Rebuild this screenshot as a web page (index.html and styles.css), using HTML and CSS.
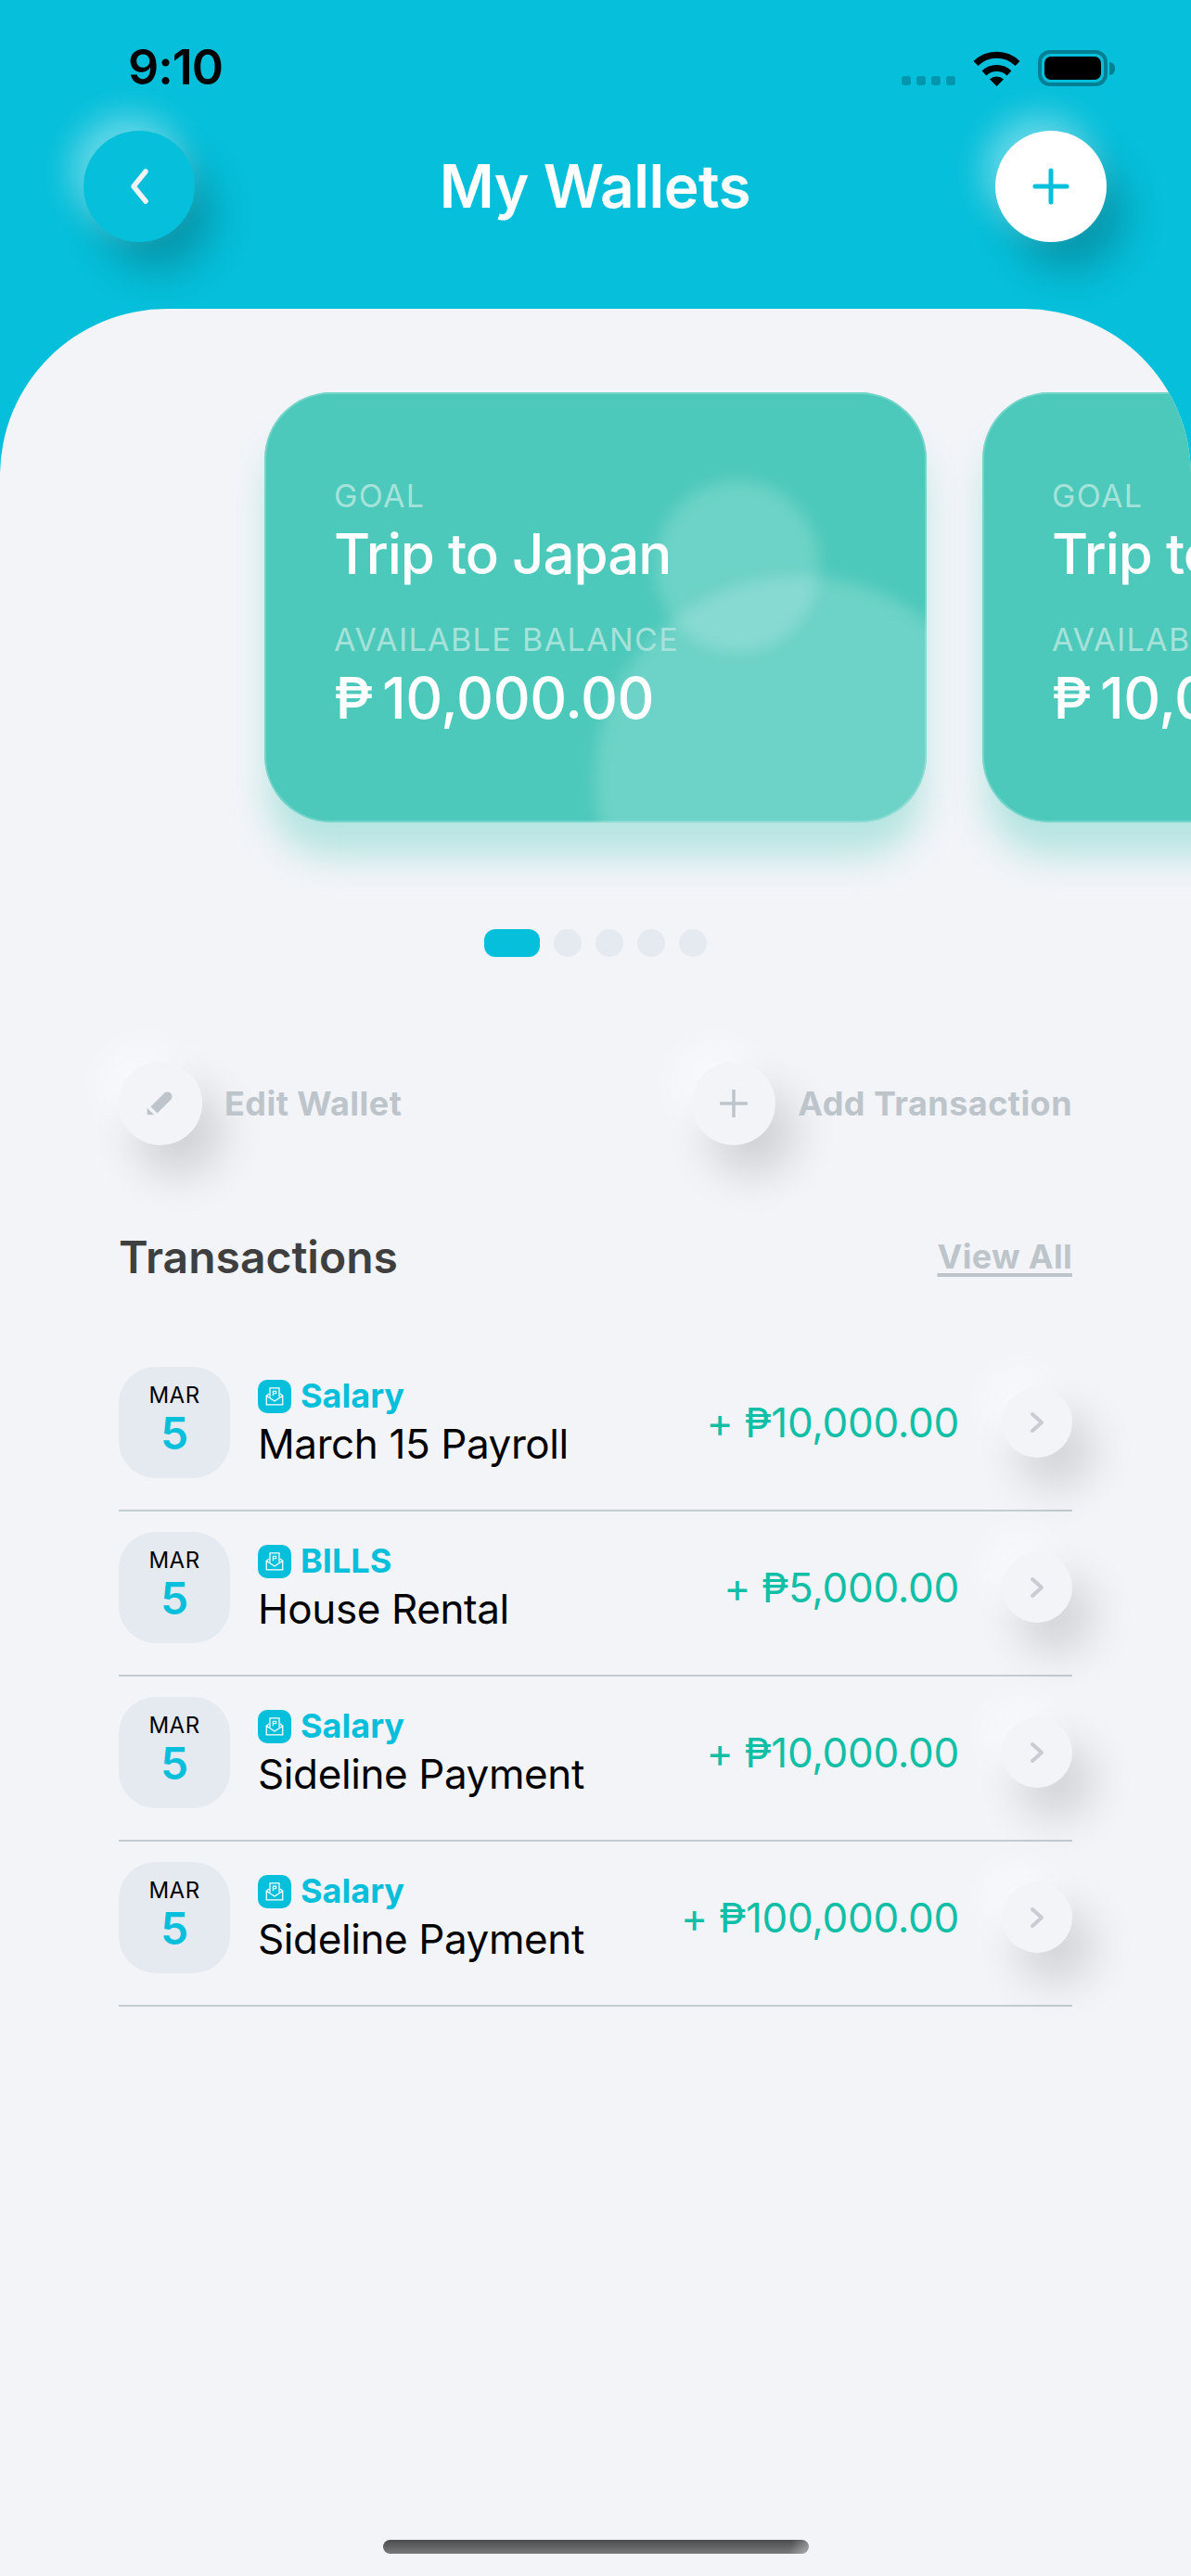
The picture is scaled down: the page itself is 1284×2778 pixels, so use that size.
FILE: index.html
```html
<!DOCTYPE html>
<html>
<head>
    <title>My Wallets</title>
    <link rel="stylesheet" href="styles.css">
</head>
<body>
    <header class="top">
        <div class="status">
            <span class="time">9:10</span>
            <div class="status-icons">
                <div class="signal"><i></i><i></i><i></i><i></i></div>
                <svg class="wifi" width="51" height="38" viewBox="0 0 51 38">
                    <path d="M3 13.5A32 32 0 0 1 48 13.5" fill="none" stroke="#000" stroke-width="7"/>
                    <path d="M12 24A19.5 19.5 0 0 1 39 24" fill="none" stroke="#000" stroke-width="7"/>
                    <path d="M25.5 38L18 30.5A11 11 0 0 1 33 30.5Z" fill="#000"/>
                </svg>
                <div class="battery"><div class="battery-fill"></div></div>
                <div class="battery-cap"></div>
            </div>
        </div>
        <nav class="nav">
            <button class="nav-btn">
                <svg width="24" height="40" viewBox="0 0 24 40"><path d="M19 4L6 20L19 36" fill="none" stroke="#f2f3f7" stroke-width="5.500" stroke-linecap="round" stroke-linejoin="round"/></svg>
            </button>
            <h1>My Wallets</h1>
            <button class="nav-btn nav-btn-add">
                <svg width="40" height="40" viewBox="0 0 40 40"><path d="M20 3V37M3 20H37" fill="none" stroke="#06bfda" stroke-width="5" stroke-linecap="round"/></svg>
            </button>
        </nav>
    </header>

    <main class="sheet">
        <div class="cards">
            <section class="card">
                <div class="blob blob-small"></div>
                <div class="blob blob-big"></div>
                <div class="card-label">GOAL</div>
                <div class="card-value">Trip to Japan</div>
                <div class="card-label card-label-gap">AVAILABLE BALANCE</div>
                <div class="card-value card-money">₱ 10,000.00</div>
            </section>
            <section class="card">
                <div class="blob blob-small"></div>
                <div class="blob blob-big"></div>
                <div class="card-label">GOAL</div>
                <div class="card-value">Trip to Japan</div>
                <div class="card-label card-label-gap">AVAILABLE BALANCE</div>
                <div class="card-value card-money">₱ 10,000.00</div>
            </section>
        </div>

        <div class="dots">
            <span class="dot dot-active"></span>
            <span class="dot"></span>
            <span class="dot"></span>
            <span class="dot"></span>
            <span class="dot"></span>
        </div>

        <div class="actions">
            <div class="action">
                <div class="soft-btn action-btn">
                    <svg width="30" height="28" viewBox="0 0 30 28">
                        <path d="M8 21L22.500 6.500" fill="none" stroke="#bdc5cb" stroke-width="10"/>
                        <circle cx="22.500" cy="6.500" r="5" fill="#bdc5cb"/>
                        <path d="M.7 26.300V19L8.300 26.300Z" fill="#bdc5cb"/>
                    </svg>
                </div>
                <span>Edit Wallet</span>
            </div>
            <div class="action">
                <div class="soft-btn action-btn">
                    <svg width="30" height="30" viewBox="0 0 30 30"><path d="M15 1V29M1 15H29" fill="none" stroke="#bdc5cb" stroke-width="3.500" stroke-linecap="round"/></svg>
                </div>
                <span>Add Transaction</span>
            </div>
        </div>

        <div class="list-head">
            <h2>Transactions</h2>
            <a class="view-all">View All</a>
        </div>

        <ul class="list" id="list"></ul>

        <div class="home-bar"></div>
    </main>

    <script>
        const rows = [
            { tag: 'Salary', name: 'March 15 Payroll', amount: '+ ₱10,000.00' },
            { tag: 'BILLS', name: 'House Rental', amount: '+ ₱5,000.00' },
            { tag: 'Salary', name: 'Sideline Payment', amount: '+ ₱10,000.00' },
            { tag: 'Salary', name: 'Sideline Payment', amount: '+ ₱100,000.00' },
        ];

        const list = document.getElementById('list');
        rows.forEach((row) => {
            const li = document.createElement('li');
            li.classList.add('row');
            li.innerHTML = `
                <div class="date"><span class="month">MAR</span><span class="day">5</span></div>
                <div class="info">
                    <div class="tag">
                        <span class="tag-icon">
                            <svg width="20" height="20" viewBox="0 0 24 24" fill="none" stroke="#fff" stroke-width="1.500">
                                <path d="M1.500 11V22.500H22.500V11L19 8.500M5 8.500L1.500 11L12 18L22.500 11"/>
                                <path d="M6 13V1H18V13"/>
                                <path d="M10 11V5H14V8H10" stroke-width="1.300"/>
                            </svg>
                        </span>
                        <span class="tag-text">${row.tag}</span>
                    </div>
                    <div class="name">${row.name}</div>
                </div>
                <div class="amount">${row.amount}</div>
                <div class="soft-btn row-btn">
                    <svg width="16" height="24" viewBox="0 0 16 24"><path d="M3 3L13 12L3 21" fill="none" stroke="#c9cdd1" stroke-width="4" stroke-linecap="round" stroke-linejoin="round"/></svg>
                </div>
            `;
            list.appendChild(li);
        });
    </script>
</body>
</html>
```

FILE: styles.css
```css
* {
    box-sizing: border-box;
}

html, body {
    margin: 0;
    padding: 0;
}

body {
    width: 1284px;
    height: 2778px;
    overflow: hidden;
    display: flex;
    flex-direction: column;
    font-family: Inter, "Noto Sans", sans-serif;
    background-color: #06bfda;
}

.top {
    height: 333px;
    padding-top: 45px;
}

.status {
    height: 56px;
    padding: 0 82px 0 138px;
    display: flex;
    justify-content: space-between;
    align-items: center;
}

.time {
    font-size: 52px;
    font-weight: 600;
    line-height: 56px;
    color: #000;
    letter-spacing: -1px;
}

.status-icons {
    display: flex;
    align-items: flex-end;
}

.signal {
    display: flex;
    gap: 6px;
    margin-right: 19px;
    margin-bottom: 1px;
}

.signal i {
    width: 10px;
    height: 10px;
    border-radius: 3px;
    background-color: #0097ae;
}

.wifi {
    margin-right: 19px;
}

.battery {
    width: 75px;
    height: 39px;
    padding: 3px;
    border: 4px solid #007f95;
    border-radius: 13px;
}

.battery-fill {
    height: 100%;
    background-color: #000;
    border-radius: 7px;
}

.battery-cap {
    width: 6px;
    height: 14px;
    margin: 0 0 12px 2px;
    background-color: #007f95;
    border-radius: 0 7px 7px 0;
}

.nav {
    margin-top: 40px;
    padding: 0 91px 0 90px;
    display: flex;
    justify-content: space-between;
    align-items: center;
}

.nav h1 {
    margin: 0;
    font-size: 64px;
    font-weight: 600;
    line-height: 72px;
    letter-spacing: -0.5px;
    color: #fff;
}

.nav-btn {
    width: 120px;
    height: 120px;
    padding: 0;
    border: none;
    border-radius: 50%;
    display: flex;
    align-items: center;
    justify-content: center;
    background-color: #06bfda;
    box-shadow: -12px -16px 36px rgba(255, 255, 255, 0.4), 20px 30px 45px rgba(0, 0, 0, 0.22);
}

.nav-btn-add {
    background-color: #fff;
}

.sheet {
    flex: 1;
    display: flex;
    flex-direction: column;
    overflow: hidden;
    background-color: #f2f4f8;
    border-radius: 180px 180px 0 0;
}

.cards {
    margin-top: 90px;
    padding-left: 285px;
    display: flex;
    gap: 60px;
}

.card {
    position: relative;
    flex: none;
    width: 714px;
    height: 464px;
    padding: 92px 75px 0;
    overflow: hidden;
    border-radius: 72px;
    background-color: #4dc9bb;
    box-shadow: 0 40px 36px -4px rgba(77, 201, 187, 0.36);
}

/* overflow would cut a border on the blobs, so the edge sits on an inner ring */
.card::after {
    content: "";
    position: absolute;
    inset: 0;
    border: 2px solid rgba(255, 255, 255, 0.22);
    border-radius: 72px;
}

.blob {
    position: absolute;
    border-radius: 50%;
    background-color: rgba(255, 255, 255, 0.18);
    filter: blur(8px);
}

.blob-small {
    left: 421px;
    top: 95px;
    width: 178px;
    height: 186px;
}

.blob-big {
    left: 356px;
    top: 198px;
    width: 440px;
    height: 440px;
}

.card-label,
.card-value {
    position: relative;
}

.card-label {
    font-size: 34px;
    line-height: 40px;
    letter-spacing: 1.4px;
    color: #a5e2da;
}

.card-label-gap {
    margin-top: 38px;
}

.card-value {
    margin-top: 7px;
    font-size: 60px;
    font-weight: 500;
    line-height: 70px;
    letter-spacing: -1px;
    color: #fff;
}

.card-money {
    margin-top: 8px;
    font-size: 62px;
    letter-spacing: -0.4px;
    word-spacing: -6px;
}

.dots {
    margin-top: 115px;
    display: flex;
    justify-content: center;
    gap: 15px;
}

.dot {
    width: 30px;
    height: 30px;
    border-radius: 50%;
    background-color: #e5eaf1;
}

.dot-active {
    width: 60px;
    border-radius: 12px;
    background-color: #06bfda;
}

.soft-btn {
    flex: none;
    border-radius: 50%;
    display: flex;
    align-items: center;
    justify-content: center;
    background-color: #f2f4f8;
    box-shadow: -20px -20px 40px rgba(255, 255, 255, 0.5), 20px 30px 50px rgba(0, 0, 0, 0.16);
}

.actions {
    margin-top: 113px;
    padding: 0 128px;
    display: flex;
    justify-content: space-between;
}

.action {
    display: flex;
    align-items: center;
    gap: 24px;
    font-size: 36px;
    font-weight: 700;
    letter-spacing: 0.45px;
    color: #bdc5cb;
}

.action-btn {
    width: 90px;
    height: 90px;
}

.list-head {
    margin-top: 90px;
    padding: 0 128px;
    display: flex;
    justify-content: space-between;
    align-items: center;
    height: 60px;
}

.list-head h2 {
    margin: 0;
    font-size: 48px;
    font-weight: 600;
    color: #3f3f3f;
}

.view-all {
    font-size: 36px;
    font-weight: 700;
    letter-spacing: 0.3px;
    color: #bdc5cb;
    text-decoration: underline;
    text-decoration-thickness: 4px;
    text-underline-offset: 5px;
}

.list {
    margin: 67px 0 0;
    padding: 0 128px;
    list-style: none;
}

.row {
    height: 178px;
    padding: 22px 0 34px;
    display: flex;
    align-items: center;
    border-bottom: 2px solid #c3cbd1;
}

.date {
    flex: none;
    width: 120px;
    height: 120px;
    padding-top: 17px;
    border-radius: 40px;
    display: flex;
    flex-direction: column;
    align-items: center;
    gap: 3px;
    background-color: #e5eaf0;
}

.month {
    font-size: 24px;
    line-height: 28px;
    letter-spacing: 0.5px;
    color: #000;
}

.day {
    font-size: 48px;
    font-weight: 600;
    line-height: 48px;
    color: #06bfda;
}

.info {
    margin-left: 30px;
    padding-top: 4px;
}

.tag {
    height: 36px;
    display: flex;
    align-items: center;
    gap: 10px;
    font-size: 36px;
    font-weight: 700;
    color: #06bfda;
}

.tag-text {
    margin-top: -3px;
}

.tag-icon {
    width: 36px;
    height: 36px;
    border-radius: 10px;
    display: flex;
    align-items: center;
    justify-content: center;
    background-color: #06bfda;
}

.name {
    margin: 7px 0 1px;
    font-size: 44px;
    line-height: 52px;
    letter-spacing: -0.4px;
    color: #000;
}

.amount {
    margin-left: auto;
    font-size: 44px;
    letter-spacing: -0.3px;
    color: #10bfa6;
}

.row-btn {
    width: 76px;
    height: 76px;
    margin-left: 46px;
}

.home-bar {
    width: 459px;
    height: 15px;
    margin: auto auto 24px;
    border-radius: 8px;
    background: linear-gradient(112deg, transparent 95%, rgba(255, 255, 255, 0.4)), linear-gradient(180deg, #4b4c4e, #78797b);
}
```
